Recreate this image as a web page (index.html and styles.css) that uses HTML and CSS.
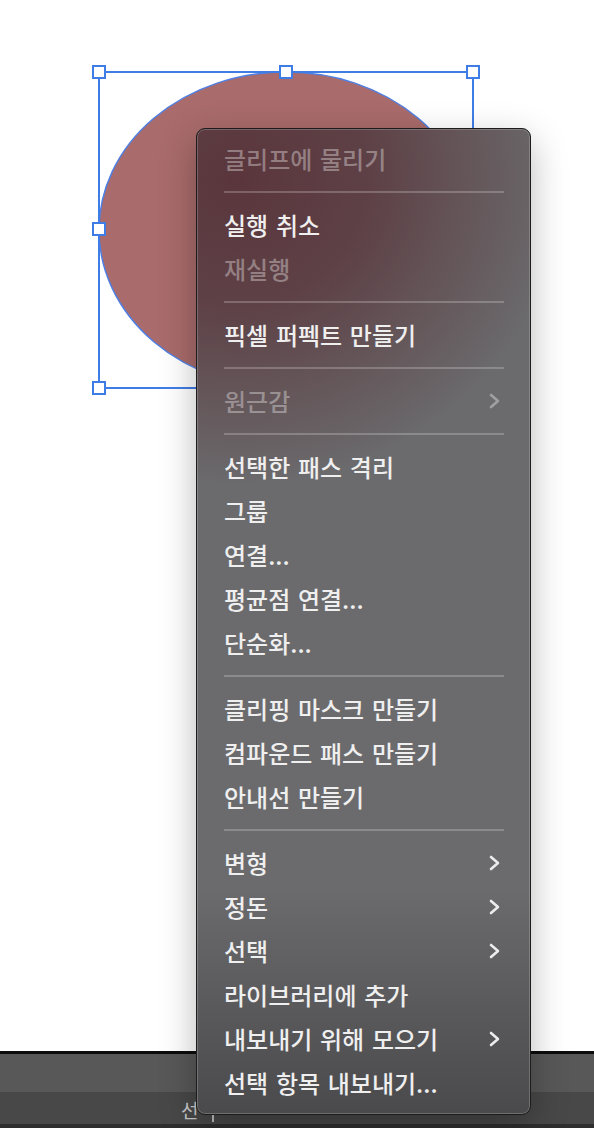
FILE: index.html
```html
<!DOCTYPE html>
<html lang="ko">
<head>
    <meta charset="UTF-8" />
    <title>Context menu</title>
    <link rel="stylesheet" href="styles.css">
</head>
<body>
    <div class="canvas">
        <svg class="art" width="594" height="400" viewBox="0 0 594 400">
            <ellipse cx="286" cy="230" rx="187" ry="158" fill="#a96b6b" stroke="#4f7fe3" stroke-width="1.5" />
            <rect x="99" y="72" width="374" height="316" fill="none" stroke="#3f7de6" stroke-width="2" />
            <g fill="#fff" stroke="#3f7de6" stroke-width="2">
                <rect x="93" y="66" width="12" height="12" />
                <rect x="280" y="66" width="12" height="12" />
                <rect x="467" y="66" width="12" height="12" />
                <rect x="93" y="223" width="12" height="12" />
                <rect x="93" y="382" width="12" height="12" />
            </g>
        </svg>
    </div>
    <div class="statusbar">
        <div class="bar-top"></div>
        <div class="bar-bottom">
            <span class="bar-label">선</span>
            <span class="bar-tick"></span>
        </div>
    </div>

    <ul class="menu">
        <li class="item off">글리프에 물리기</li>
        <li class="sep"></li>
        <li class="item">실행 취소</li>
        <li class="item off">재실행</li>
        <li class="sep"></li>
        <li class="item">픽셀 퍼펙트 만들기</li>
        <li class="sep"></li>
        <li class="item off">원근감<svg class="chev" width="11" height="16" viewBox="0 0 11 16"><path d="M2 2 L9 8 L2 14" /></svg></li>
        <li class="sep"></li>
        <li class="item">선택한 패스 격리</li>
        <li class="item">그룹</li>
        <li class="item">연결...</li>
        <li class="item">평균점 연결...</li>
        <li class="item">단순화...</li>
        <li class="sep"></li>
        <li class="item">클리핑 마스크 만들기</li>
        <li class="item">컴파운드 패스 만들기</li>
        <li class="item">안내선 만들기</li>
        <li class="sep"></li>
        <li class="item">변형<svg class="chev" width="11" height="16" viewBox="0 0 11 16"><path d="M2 2 L9 8 L2 14" /></svg></li>
        <li class="item">정돈<svg class="chev" width="11" height="16" viewBox="0 0 11 16"><path d="M2 2 L9 8 L2 14" /></svg></li>
        <li class="item">선택<svg class="chev" width="11" height="16" viewBox="0 0 11 16"><path d="M2 2 L9 8 L2 14" /></svg></li>
        <li class="item">라이브러리에 추가</li>
        <li class="item">내보내기 위해 모으기<svg class="chev" width="11" height="16" viewBox="0 0 11 16"><path d="M2 2 L9 8 L2 14" /></svg></li>
        <li class="item">선택 항목 내보내기...</li>
    </ul>
</body>
</html>
```

FILE: styles.css
```css
*{
    box-sizing: border-box;
}
html,body{
    margin: 0;
    padding: 0;
}
body{
    width: 594px;
    height: 1128px;
    overflow: hidden;
    position: relative;
    display: flex;
    flex-direction: column;
    background: #fff;
    font-family: "Noto Sans CJK KR", "Noto Sans", sans-serif;
}
.canvas{
    height: 1052px;
    background: #fff;
}
.art{
    display: block;
}
.statusbar{
    flex: 1;
    display: flex;
    flex-direction: column;
    border-top: 3px solid #0c0c0c;
}
.bar-top{
    height: 38px;
    background: #585858;
}
.bar-bottom{
    flex: 1;
    display: flex;
    align-items: flex-start;
    gap: 14px;
    background: #484848;
    border-bottom: 4px solid #2e2e2e;
    padding: 4px 0 0 181px;
}
.bar-label{
    font-size: 19px;
    line-height: 28px;
    color: #c9c9c9;
}
.bar-tick{
    width: 2px;
    height: 7px;
    margin-top: 19px;
    background: #bdbdbd;
}

/* context menu */
.menu{
    list-style: none;
    margin: 0;
    padding: 8px 0;
    position: absolute;
    left: 196px;
    top: 128px;
    width: 335px;
    height: 987px;
    border: 1px solid #1c1c1c;
    border-radius: 9px;
    box-shadow: inset 0 0 0 1px rgba(255,255,255,.2), 0 12px 36px rgba(0,0,0,.28);
    background:
        linear-gradient(to bottom, rgba(74,74,76,0) 0, rgba(74,74,76,0) 760px, rgba(74,74,76,1) 100%),
        radial-gradient(ellipse 330px 310px at 40px 50px, rgba(90,54,60,1) 0, rgba(90,54,60,.8) 40%, rgba(107,107,109,0) 100%),
        #6b6b6d;
}
.item{
    height: 44px;
    line-height: 44px;
    padding: 0 30px 0 27px;
    display: flex;
    align-items: center;
    justify-content: space-between;
    font-size: 24px;
    font-weight: 500;
    word-spacing: 1px;
    color: #efefef;
    white-space: nowrap;
}
.item.off{
    color: rgba(255,255,255,.36);
}
.sep{
    height: 22px;
    display: flex;
    align-items: center;
    margin: 0 26px 0 27px;
}
.sep::before{
    content: "";
    flex: 1;
    height: 2px;
    background: rgba(255,255,255,.22);
}
.chev{
    fill: none;
    stroke: #ececec;
    stroke-width: 2.6;
    stroke-linecap: round;
    stroke-linejoin: round;
}
.off .chev{
    stroke: rgba(255,255,255,.36);
}
```
